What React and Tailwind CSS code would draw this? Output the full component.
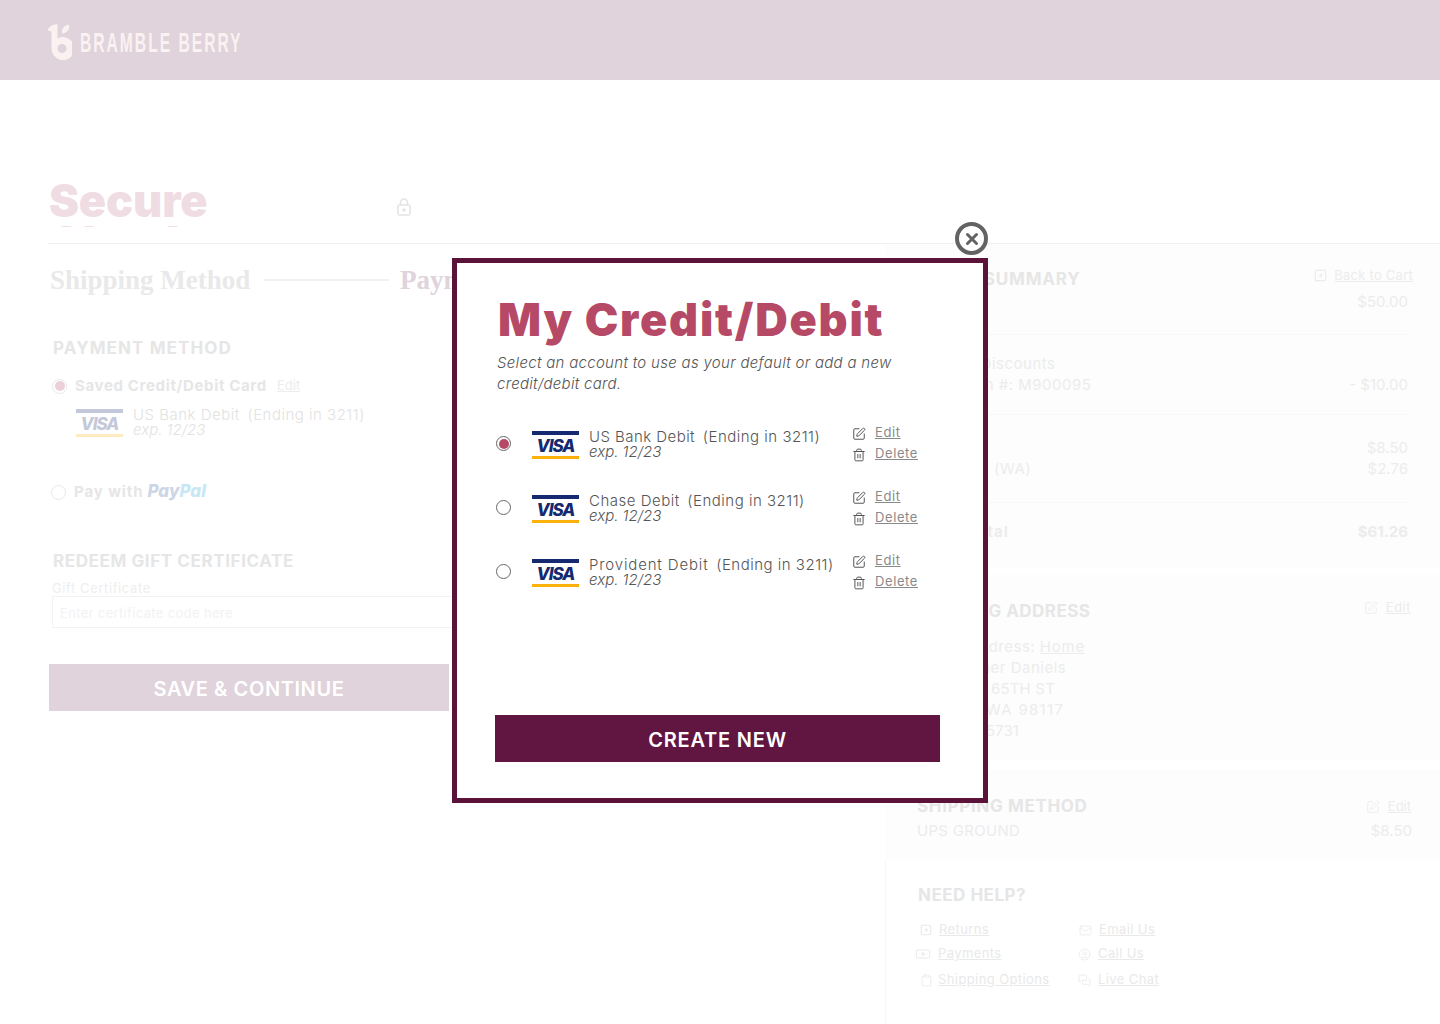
import { SquarePen, Trash2, Mail, CircleUser, Banknote, Clipboard, MessagesSquare } from 'lucide-react';

const sans = "font-['Inter','Liberation_Sans',sans-serif]";

const BackIcon = ({ className }) => (
    <svg viewBox="0 0 14 14" className={className} fill="none" stroke="currentColor" strokeWidth="1.3">
        <rect x="1.5" y="1.5" width="11" height="11" rx="1" />
        <path d="M8.5 4.5v5L5 7z" fill="currentColor" stroke="none" />
    </svg>
);

const VisaCard = ({ className = '' }) => (
    <div className={`w-[47px] h-[28px] flex flex-col justify-between shrink-0 ${className}`}>
        <div className="h-[4px] bg-[#14296f]" />
        <div className="text-center text-[17px] leading-[20px] pt-[1px] font-extrabold italic tracking-[-1px] text-[#14296f]">VISA</div>
        <div className="h-[4px] bg-[#fdb10b]" />
    </div>
);

const Radio = ({ checked, faded }) => (
    <span className={`w-[15px] h-[15px] rounded-full border flex items-center justify-center shrink-0 ${faded ? 'border-[#e8e8e8]' : 'border-[#666666]'} bg-white`}>
        {checked && <span className={`w-[10px] h-[10px] rounded-full ${faded ? 'bg-[#edcfd7]' : 'bg-[#b64a66]'}`} />}
    </span>
);

const CardText = ({ name, color, nameTrack = 'tracking-[0.5px]' }) => (
    <div className={color}>
        <div className="text-[15px] leading-[16px] tracking-[0.5px] font-light whitespace-pre"><span className={nameTrack}>{name}</span> <span className="ml-[3px]">(Ending in 3211)</span></div>
        <div className="text-[15px] leading-[14px] font-light italic">exp. 12/23</div>
    </div>
);

const cards = [
    { name: 'US Bank Debit', track: 'tracking-[0.45px]' },
    { name: 'Chase Debit', track: 'tracking-[0.5px]' },
    { name: 'Provident Debit', track: 'tracking-[0.85px]' },
];

const CardRow = ({ name, track, checked }) => (
    <div className="h-[64px] flex items-start">
        <div className="w-[37px] pl-[1px] pt-[15px]"><Radio checked={checked} /></div>
        <VisaCard className="mt-[10px]" />
        <div className="w-[273px] pl-[10px] pt-[8px]">
            <CardText name={name} nameTrack={track} color="text-[#555555]" />
        </div>
        <div className="text-[#8a8a8a] text-[13px] pt-[1px]">
            <div className="flex items-center h-[21px] gap-[9px]">
                <SquarePen size={14} strokeWidth={1.7} className="text-[#555555] mt-[2px]" />
                <span className="underline tracking-[0.6px]">Edit</span>
            </div>
            <div className="flex items-center h-[21px] gap-[9px]">
                <Trash2 size={14} strokeWidth={1.7} className="text-[#555555] mt-[2px]" />
                <span className="underline tracking-[0.6px]">Delete</span>
            </div>
        </div>
    </div>
);

const SummaryRow = ({ left, right, bold }) => (
    <div className={`flex justify-between h-[21px] leading-[21px] text-[15px] ${bold ? 'font-bold' : ''}`}>
        <span className={bold ? 'tracking-[0.9px]' : 'tracking-[0.5px]'}>{left}</span>
        <span>{right}</span>
    </div>
);

const HelpLink = ({ icon, label, className = '' }) => (
    <div className={`flex items-center gap-[7px] h-[24px] text-[13px] text-[#e9e9e9] ${className}`}>
        {icon}
        <span className="underline tracking-[0.4px]">{label}</span>
    </div>
);

const App = () => {
    return (
        <div className={`relative w-[1440px] h-[1024px] overflow-hidden bg-white ${sans}`}>
            <header className="h-[80px] bg-[#e0d3dc] pl-[48px] flex items-center">
                <svg viewBox="0 0 24 36" className="w-[24px] h-[36px] text-[#faf1f1] mt-[3px]" fill="currentColor">
                    <path d="M0 4.500 4.500 1 9.500 0V14.500A11.500 11.500 0 1 1 3.500 24.500V7.500L.5 7zM9.500 24.500a4.500 4.500 0 1 0 9 0 4.500 4.500 0 0 0-9 0z" fillRule="evenodd" />
                    <path d="M14 9.500C13.500 5 15.500 1.500 21 0.500 22 5 19.500 9 14 9.500z" />
                </svg>
                <span className="ml-[8px] mt-[6px] font-['Liberation_Sans_Narrow','Liberation_Sans',sans-serif] font-bold text-[28px] tracking-[3.5px] text-[#faf1f1] scale-x-[0.56] origin-left whitespace-nowrap">BRAMBLE BERRY</span>
            </header>

            <div className="flex h-[944px]">
                <main className="w-[885px] shrink-0 pl-[48px]">
                    <div className="h-[164px] border-b border-[#f0f0f0] flex items-start">
                        <div className="w-[349px] mt-[100px] h-[47px] overflow-hidden pl-[1px] text-[45px] leading-[42px] tracking-[-0.1px] font-black text-[#efdde3]">
                            <div>Secure</div>
                            <div>Checkout</div>
                        </div>
                        <svg viewBox="0 0 14 18" className="w-[14px] h-[18px] mt-[118px] text-[#e4e4e4]" fill="none" stroke="currentColor" strokeWidth="1.6">
                            <rect x="1" y="7" width="12" height="10" rx="1.500" />
                            <path d="M3.500 7V4.500a3.500 3.500 0 0 1 7 0V7" />
                            <circle cx="7" cy="12" r="1" fill="currentColor" />
                        </svg>
                    </div>

                    <div className="flex items-center mt-[20px] pl-[2px] h-[32px] font-['Liberation_Serif',serif] font-bold text-[27px] whitespace-nowrap">
                        <span className="text-[#e9e9ea] w-[214px]">Shipping Method</span>
                        <span className="h-[2px] w-[125px] bg-[#f2f1f2]" />
                        <span className="ml-[11px] text-[#e0d3dc]">Payment</span>
                    </div>

                    <div className="pl-[5px] mt-[42px] text-[17px] leading-[20px] font-bold tracking-[1.1px] text-[#e6e6e6]">PAYMENT METHOD</div>

                    <div className="mt-[18px] flex items-center h-[20px] pl-[4px] gap-[8px]">
                        <Radio checked faded />
                        <span className="text-[15px] font-bold tracking-[0.65px] text-[#e6e6e6] w-[194px]">Saved Credit/Debit Card</span>
                        <span className="text-[13px] underline text-[#ececec]">Edit</span>
                    </div>
                    <div className="flex ml-[28px] mt-[13px]">
                        <VisaCard className="opacity-25" />
                        <div className="pl-[10px] mt-[-2px]">
                            <CardText name="US Bank Debit" color="text-[#e2e2e2]" />
                        </div>
                    </div>

                    <div className="mt-[45px] flex items-center h-[20px] pl-[3px] gap-[8px]">
                        <Radio faded />
                        <span className="text-[15px] font-bold tracking-[0.9px] text-[#e6e6e6]">Pay with</span>
                        <span className="text-[17px] font-extrabold italic text-[#cdd5e6] ml-[-4px]">Pay<span className="text-[#c8e7f5]">Pal</span></span>
                    </div>

                    <div className="pl-[5px] mt-[49px] text-[17px] leading-[20px] font-bold tracking-[0.6px] text-[#e6e6e6]">REDEEM GIFT CERTIFICATE</div>
                    <div className="pl-[4px] mt-[9px] text-[13px] leading-[16px] tracking-[0.6px] text-[#eeeeee]">Gift Certificate</div>
                    <div className="ml-[4px] w-[420px] h-[32px] border border-[#f3f3f3] pl-[7px] pt-[3px] flex items-center text-[13px] tracking-[0.35px] text-[#f2f2f2]">Enter certificate code here</div>
                    <div className="ml-[1px] mt-[36px] w-[400px] h-[47px] pt-[2px] bg-[#e0d3dc] flex items-center justify-center text-white text-[20px] font-semibold tracking-[0.6px]">SAVE &amp; CONTINUE</div>
                </main>

                <aside className="flex-1 flex flex-col">
                    <div className="h-[164px] shrink-0 border-b border-[#f0f0f0]" />
                    <section className="h-[324px] shrink-0 bg-[#fdfdfd] pl-[32px] text-[#ececec]">
                        <div className="flex justify-between items-start pt-[24px] h-[47px] pr-[27px]">
                            <span className="text-[17px] leading-[22px] font-bold tracking-[0.8px] text-[#e6e6e6]">ORDER SUMMARY</span>
                            <span className="flex items-center gap-[7px] text-[13px] mt-[-3px] leading-[20px] tracking-[0.25px]"><BackIcon className="w-[13px] h-[13px]" /><span className="underline">Back to Cart</span></span>
                        </div>
                        <div className="border-b border-[#f8f8f8] h-[44px] mr-[32px]">
                            <SummaryRow left="Subtotal" right="$50.00" />
                        </div>
                        <div className="border-b border-[#f8f8f8] h-[80px] pt-[18px] mr-[32px]">
                            <SummaryRow left="Coupon Discounts" right="" />
                            <SummaryRow left="Promotion #: M900095" right="- $10.00" />
                        </div>
                        <div className="border-b border-[#f8f8f8] h-[88px] pt-[22px] mr-[32px]">
                            <SummaryRow left="Shipping" right="$8.50" />
                            <SummaryRow left="Sales Tax (WA)" right="$2.76" />
                        </div>
                        <div className="pt-[18px] mr-[32px]">
                            <SummaryRow left="Order Total" right="$61.26" bold />
                        </div>
                    </section>

                    <section className="h-[185px] shrink-0 mt-[7px] bg-[#fdfdfd] pl-[32px] text-[15px] tracking-[0.5px] text-[#ececec]">
                        <div className="flex justify-between pt-[25px] pr-[29px] h-[61px]">
                            <span className="text-[17px] leading-[22px] font-bold tracking-[0.45px] text-[#e6e6e6]">SHIPPING ADDRESS</span>
                            <span className="flex items-center gap-[8px] text-[13px] h-[16px]"><SquarePen size={14} strokeWidth={1.5} /><span className="underline">Edit</span></span>
                        </div>
                        <div className="leading-[21px]">
                            <div>Saved Address: <span className="underline tracking-[0.8px]">Home</span></div>
                            <div>Christopher Daniels</div>
                            <div className="tracking-[0.2px]">12345 NE 65TH ST</div>
                            <div className="tracking-[1.3px]">Seattle, WA 98117</div>
                            <div className="tracking-[0px]">206-555-5731</div>
                        </div>
                    </section>

                    <section className="h-[90px] shrink-0 mt-[10px] bg-[#fdfdfd] pl-[32px] pr-[28px] text-[15px] text-[#ececec]">
                        <div className="flex justify-between pt-[25px] pr-[1px]">
                            <span className="text-[17px] leading-[22px] font-bold tracking-[0.65px] text-[#e6e6e6]">SHIPPING METHOD</span>
                            <span className="flex items-center gap-[8px] text-[13px] h-[22px] mt-[1px]"><SquarePen size={14} strokeWidth={1.5} /><span className="underline">Edit</span></span>
                        </div>
                        <div className="flex justify-between mt-[2px] leading-[21px]">
                            <span className="tracking-[0.3px]">UPS GROUND</span>
                            <span>$8.50</span>
                        </div>
                    </section>

                    <section className="flex-1 border-l border-[#f7f7f7] pl-[29px] pt-[24px]">
                        <div className="pl-[3px] text-[17px] leading-[22px] font-bold tracking-[0.5px] text-[#e6e6e6]">NEED HELP?</div>
                        <div className="flex mt-[12px]">
                            <div className="w-[162px]">
                                <HelpLink icon={<BackIcon className="w-[12px] h-[12px] ml-[5px]" />} label="Returns" />
                                <HelpLink icon={<Banknote size={16} strokeWidth={1.5} />} label="Payments" />
                                <HelpLink className="mt-[2px]" icon={<Clipboard size={13} strokeWidth={1.5} className="ml-[5px] mr-[-2px]" />} label="Shipping Options" />
                            </div>
                            <div>
                                <HelpLink icon={<Mail size={13} strokeWidth={1.5} className="ml-[2px]" />} label="Email Us" />
                                <HelpLink icon={<CircleUser size={13} strokeWidth={1.5} className="ml-[1px]" />} label="Call Us" />
                                <HelpLink className="mt-[2px]" icon={<MessagesSquare size={13} strokeWidth={1.5} className="ml-[1px]" />} label="Live Chat" />
                            </div>
                        </div>
                    </section>
                </aside>
            </div>

            {/* modal */}
            <div className="absolute left-[452px] top-[258px] w-[536px] h-[545px] border-[5px] border-[#5c1339] bg-white pl-[38px] pr-[43px]">
                <button className="absolute left-[498px] top-[-41px] w-[33px] h-[33px] rounded-full border-[4px] border-[#636363] bg-white flex items-center justify-center">
                    <svg viewBox="0 0 14 14" className="w-[14px] h-[14px]" fill="none" stroke="#636363" strokeWidth="3" strokeLinecap="round">
                        <path d="M2.500 2.500l9 9M11.500 2.500l-9 9" />
                    </svg>
                </button>
                <h1 className="pt-[30px] pl-[3px] text-[45px] leading-[54px] font-black tracking-[1.8px] text-[#b64a66] whitespace-nowrap">My Credit/Debit</h1>
                <p className="mt-[5px] pl-[2px] text-[15px] leading-[21px] font-light italic tracking-[0.3px] text-[#555555] w-[430px]">Select an account to use as your default or add a new credit/debit card.</p>
                <div className="mt-[27px]">
                    {cards.map((card, i) => <CardRow key={card.name} name={card.name} track={card.track} checked={i === 0} />)}
                </div>
                <div className="mt-[102px] pt-[2px] h-[47px] w-[445px] bg-[#611641] flex items-center justify-center text-white text-[20px] font-semibold tracking-[0.8px]">CREATE NEW</div>
            </div>
        </div>
    );
};

export default App;
